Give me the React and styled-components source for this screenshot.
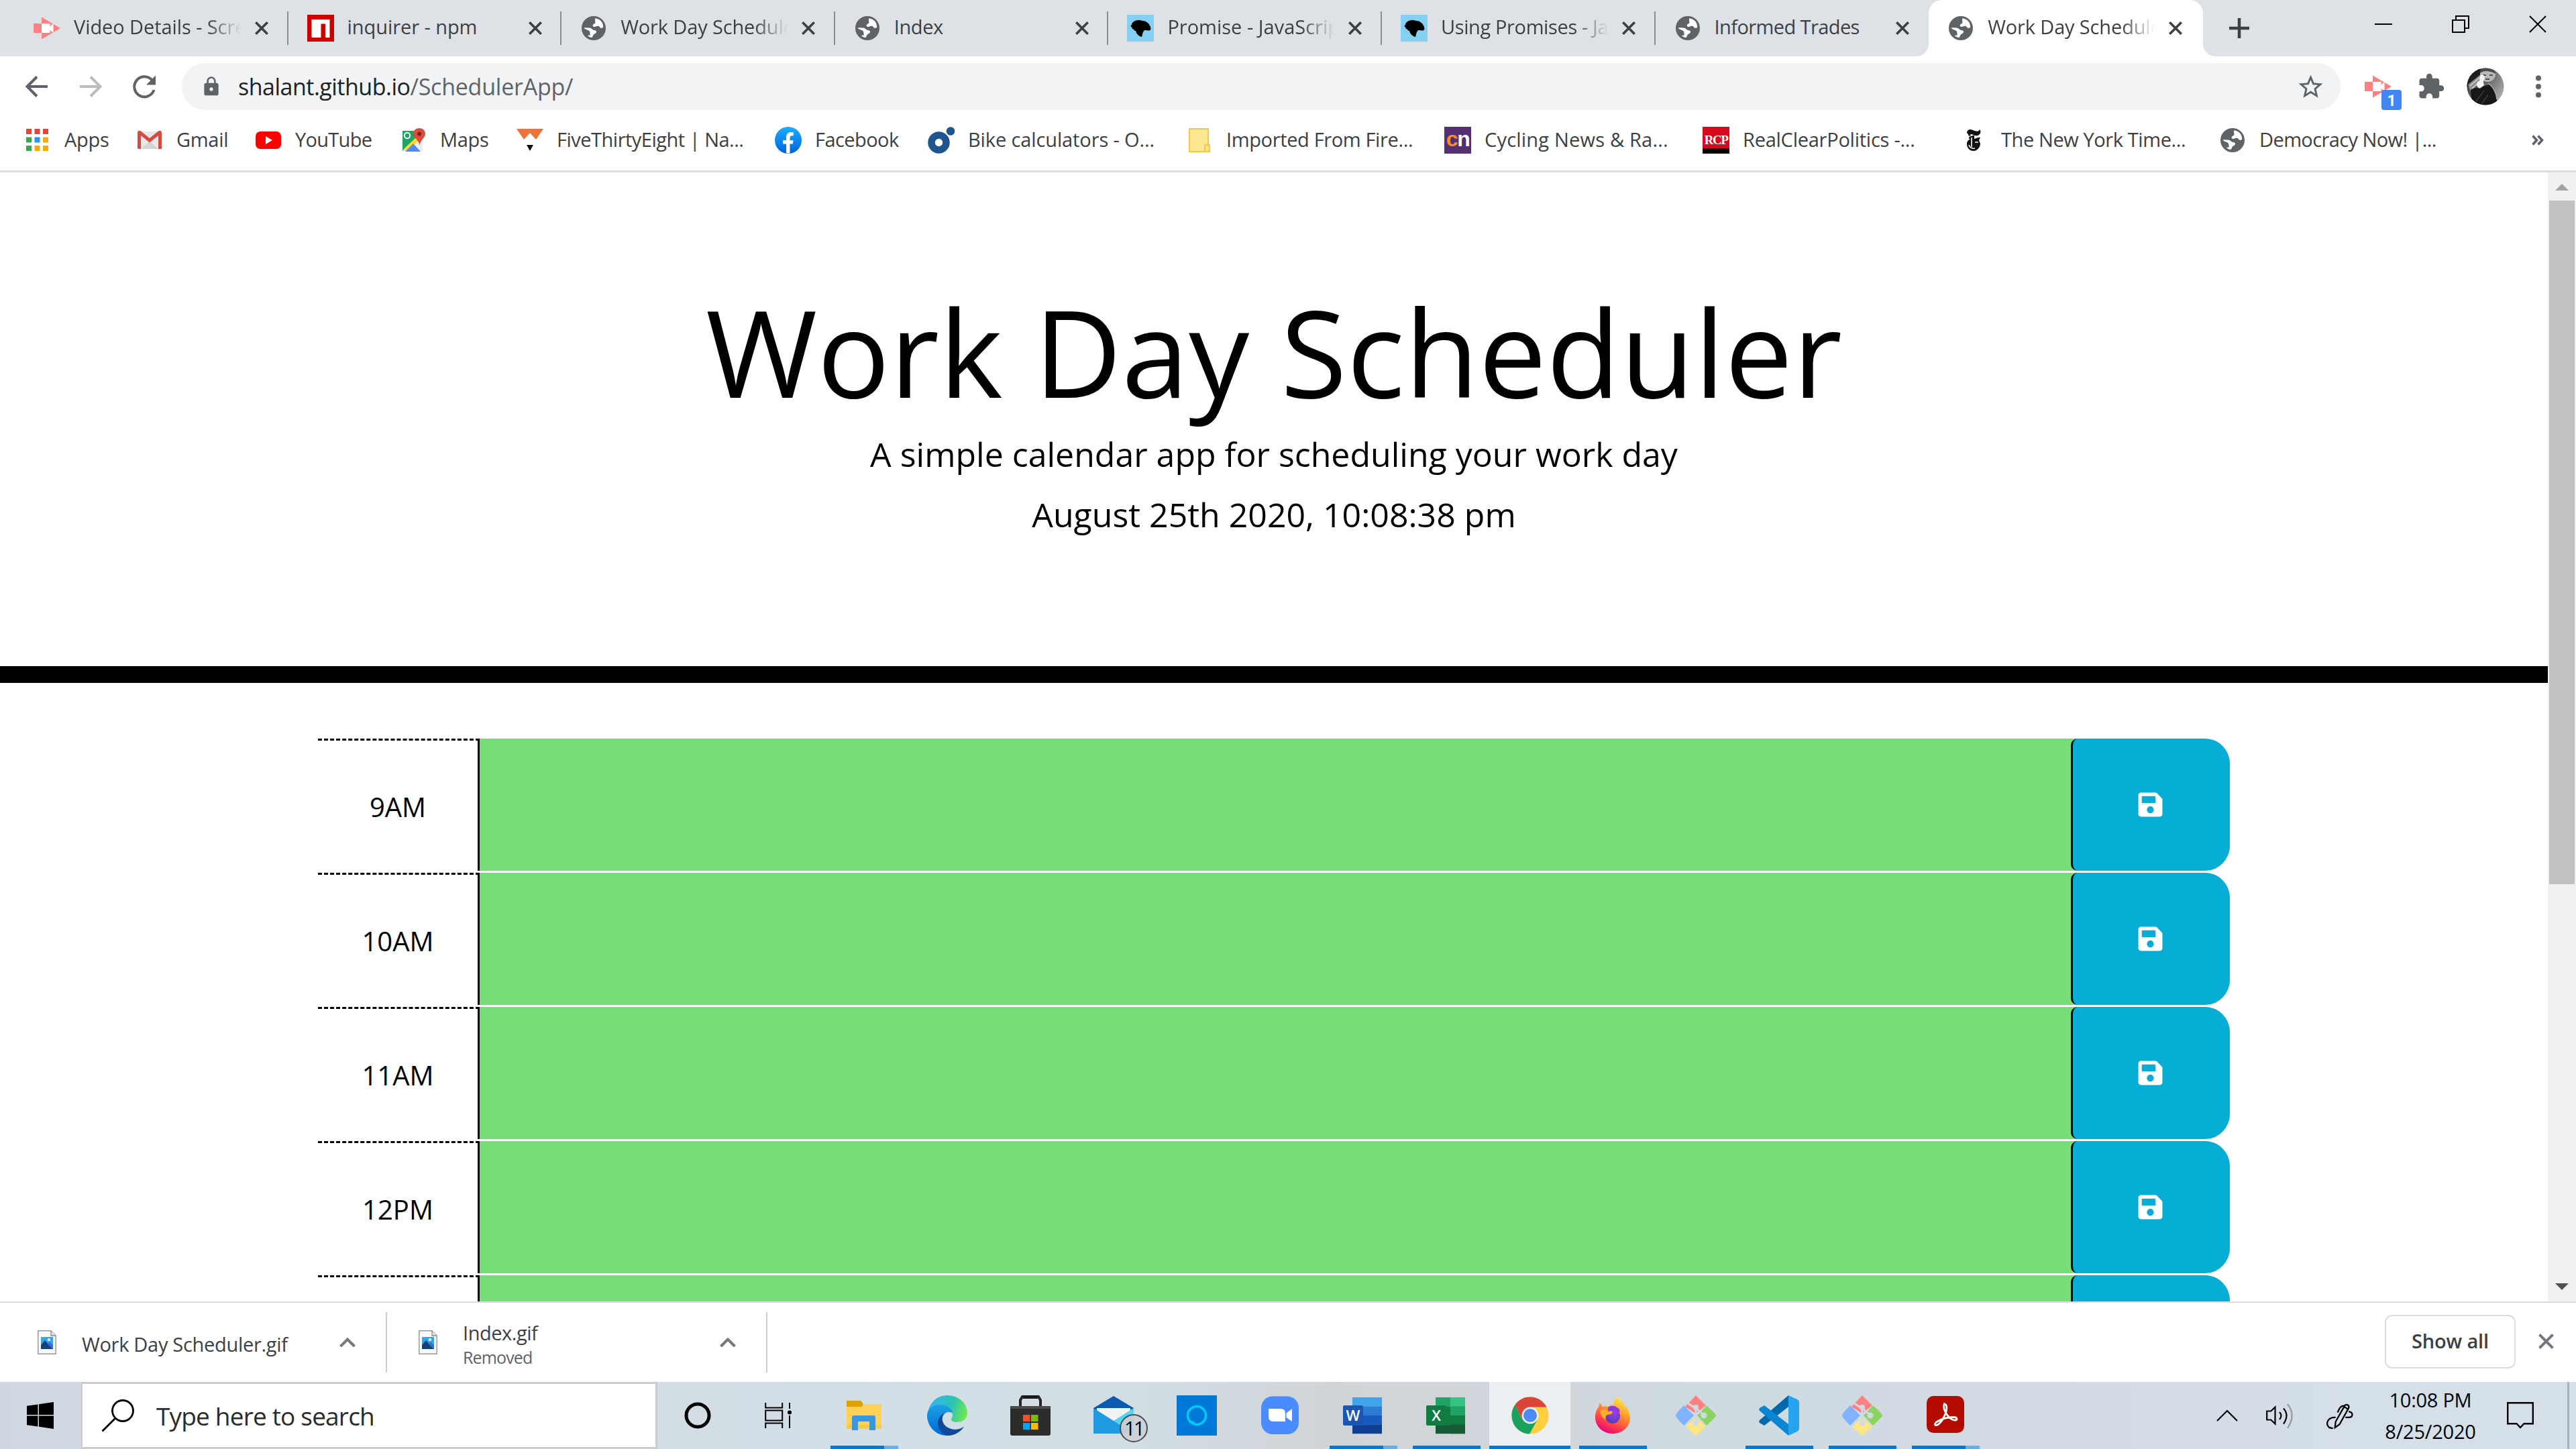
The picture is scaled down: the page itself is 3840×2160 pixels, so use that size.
import React from "react";
import styled, { createGlobalStyle } from "styled-components";
import { FaSave } from "react-icons/fa";
import { MdLock, MdExtension, MdStarBorder } from "react-icons/md";

const GlobalStyle = createGlobalStyle`
  *, *::before, *::after { box-sizing: border-box; }
  html, body { margin: 0; padding: 0; background: #fff; }
  body {
    font-family: "Open Sans", "Noto Sans", sans-serif;
    color: #3c4043;
    overflow: hidden;
  }
  svg { display: block; flex: none; }
`;

const Screen = styled.div`
  width: 3840px;
  height: 2160px;
  display: flex;
  flex-direction: column;
  background: #fff;
  overflow: hidden;
`;

const Label = styled.span`
  font-size: ${(p) => p.$size || 29}px;
  font-weight: ${(p) => p.$weight || 400};
  letter-spacing: ${(p) => p.$track || 0}px;
  color: ${(p) => p.$color || "#3c4043"};
  line-height: 40px;
  white-space: nowrap;
`;

/* ---------- tab strip ---------- */

const TabStrip = styled.div`
  height: 84px;
  flex: none;
  display: flex;
  padding-left: 22px;
  background: #dee1e6;
`;

const Tab = styled.div`
  position: relative;
  width: ${(p) => (p.$active ? 409 : 407.6)}px;
  height: 84px;
  flex: none;
  display: flex;
  align-items: center;
  padding-left: 28px;
  background: ${(p) => (p.$active ? "#fff" : "transparent")};
  border-radius: 20px 20px 0 0;

  &::before,
  &::after {
    content: "";
    display: ${(p) => (p.$active ? "block" : "none")};
    position: absolute;
    bottom: 0;
    width: 18px;
    height: 18px;
  }
  &::before {
    left: -18px;
    background: radial-gradient(circle at 0 0, transparent 17.5px, #fff 18px);
  }
  &::after {
    right: -18px;
    background: radial-gradient(circle at 100% 0, transparent 17.5px, #fff 18px);
  }
`;

const TabTitle = styled.div`
  width: 249px;
  height: 44px;
  margin: 0 21px 0 20px;
  padding-bottom: 4px;
  overflow: hidden;
  mask-image: ${(p) => (p.$fade ? "linear-gradient(90deg, #000 80%, transparent 100%)" : "none")};
`;

const TabDivider = styled.div`
  width: 2px;
  height: 50px;
  margin-left: auto;
  background: #8a8d91;
`;

const NewTab = styled.div`
  display: flex;
  align-items: center;
  margin-left: 38px;
`;

const WindowControls = styled.div`
  display: flex;
  margin-left: auto;
`;

const WindowButton = styled.div`
  width: 115px;
  height: 71px;
  display: flex;
  align-items: center;
  justify-content: center;
`;

/* ---------- toolbar ---------- */

const Toolbar = styled.div`
  height: 90px;
  flex: none;
  display: flex;
  align-items: center;
  padding: 0 38px 0 35px;
  color: #5f6368;
`;

const NavButtons = styled.div`
  display: flex;
  gap: 40px;
  width: 236px;
`;

const Omnibox = styled.div`
  width: 3218px;
  height: 70px;
  flex: none;
  display: flex;
  align-items: center;
  padding: 0 23px 0 28px;
  border-radius: 35px;
  background: #f1f3f4;
`;

const Url = styled.div`
  flex: 1;
  margin-left: 24px;
`;

const Extensions = styled.div`
  flex: 1;
  display: flex;
  align-items: center;
  padding-left: 36px;
`;

const ExtensionIcon = styled.div`
  position: relative;
  width: 78px;
  height: 40px;
`;

const Badge = styled.div`
  position: absolute;
  left: 25px;
  top: 25px;
  width: 30px;
  height: 30px;
  border-radius: 4px;
  background: #4285f4;
  color: #fff;
  font-family: Roboto, sans-serif;
  font-size: 23px;
  font-weight: 700;
  line-height: 33px;
  text-align: center;
`;

const PuzzleSlot = styled.div`
  width: 74px;
`;

const MenuSlot = styled.div`
  margin-left: auto;
  margin-right: 13px;
`;

/* ---------- bookmarks ---------- */

const BookmarkBar = styled.div`
  height: 83px;
  flex: none;
  display: flex;
  align-items: flex-start;
  padding: 13px 0 0 36px;
  border-bottom: 3px solid #dadce0;
`;

const Bookmark = styled.div`
  width: ${(p) => p.$width}px;
  height: 44px;
  flex: none;
  display: flex;
  align-items: center;
  gap: 20px;
`;

const BookmarkText = styled.div`
  padding-bottom: 2px;
`;

const Overflow = styled.div`
  height: 44px;
  display: flex;
  align-items: center;
  margin-left: 81px;
`;

/* ---------- page ---------- */

const Viewport = styled.div`
  height: 1683px;
  flex: none;
  display: flex;
  overflow: hidden;
`;

const Page = styled.main`
  width: 3798px;
  height: 1683px;
  overflow: hidden;
  color: #000;
`;

const Jumbotron = styled.header`
  height: 761px;
  padding-top: 159px;
  border-bottom: 25px solid #000;
  text-align: center;
`;

const Title = styled.h1`
  margin: 0 0 8px;
  font-size: 180px;
  font-weight: 400;
  line-height: 216px;
`;

const Lead = styled.p`
  margin: 0 0 15px;
  font-size: 50px;
  line-height: 75px;
`;

const Container = styled.section`
  width: 2850px;
  margin: 83px auto 0;
  display: flex;
  flex-direction: column;
  gap: 3px;
`;

const TimeRow = styled.div`
  height: 197px;
  flex: none;
  display: grid;
  grid-template-columns: 241px 1fr;
`;

const Hour = styled.div`
  display: flex;
  align-items: center;
  justify-content: center;
  padding-top: 3px;
  border-top: 3px dashed #000;
  border-right: 3px solid #000;
  font-size: 40px;
`;

const Slot = styled.div`
  display: flex;
  justify-content: flex-end;
  background: #77dd77;
  border-radius: 0 37.5px 37.5px 0;
`;

const SaveButton = styled.button`
  width: 237px;
  height: 197px;
  display: flex;
  align-items: center;
  justify-content: center;
  margin: 0;
  padding: 0 3px 0 0;
  border: 0 solid #000;
  border-left-width: 3px;
  border-radius: 10px 37.5px 37.5px 10px;
  background: #06aed5;
  color: #fff;
`;

const Scrollbar = styled.div`
  width: 42px;
  display: flex;
  flex-direction: column;
  align-items: center;
  padding-top: 17px;
  background: #f1f1f1;
`;

const Thumb = styled.div`
  width: 38px;
  height: 1019px;
  margin-top: 15px;
  background: #c1c1c1;
`;

const ScrollDown = styled.div`
  margin-top: auto;
  margin-bottom: 17px;
`;

/* ---------- download shelf ---------- */

const Shelf = styled.div`
  height: 120px;
  flex: none;
  display: flex;
  align-items: center;
  border-top: 2px solid #dadce0;
`;

const Download = styled.div`
  width: ${(p) => p.$width}px;
  height: 90px;
  display: flex;
  align-items: center;
  padding: 0 45px 0 ${(p) => p.$inset}px;
  border-right: 2px solid #cccdcf;
`;

const DownloadText = styled.div`
  display: flex;
  flex-direction: column;
  margin-left: 38px;
  margin-right: auto;
  padding-top: 5px;
`;

const SubLabel = styled(Label)`
  line-height: 33px;
`;

const ShowAll = styled.div`
  width: 195px;
  height: 80px;
  display: flex;
  align-items: center;
  justify-content: center;
  margin: 0 34px 2px auto;
  padding-bottom: 3px;
  border: 2px solid #dadce0;
  border-radius: 11px;
`;

const ShelfClose = styled.div`
  margin: 0 33px 3px 0;
`;

/* ---------- taskbar ---------- */

const Taskbar = styled.div`
  height: 100px;
  flex: none;
  display: flex;
  align-items: stretch;
  background: linear-gradient(
    90deg,
    #cfd7e0 0,
    #d3dfe6 1350px,
    #d2dce3 1750px,
    #d1d4d7 1980px,
    #d1d5da 2150px,
    #cfdae1 2530px,
    #d3dae4 3060px,
    #d5dfe8 3500px
  );
`;

const Start = styled.div`
  width: 121px;
  display: flex;
  align-items: center;
  padding-left: 40px;
`;

const Search = styled.div`
  width: 859px;
  display: flex;
  align-items: center;
  gap: 33px;
  padding-left: 28px;
  background: #fff;
  border: solid #cccccc;
  border-width: 3px 3px 3px 2px;
`;

const SearchText = styled.div`
  padding-top: 2px;
`;

const SystemButton = styled.div`
  width: 120px;
  display: flex;
  align-items: center;
  justify-content: center;
`;

const Apps = styled.div`
  display: flex;
  padding-left: 6px;
`;

const AppButton = styled.div`
  width: ${(p) => (p.$active ? 121 : 101)}px;
  margin: 0 ${(p) => (p.$active ? "1px 0 2px" : "11.5px")};
  display: flex;
  flex-direction: column;
  align-items: center;
  justify-content: space-between;
  background: ${(p) => (p.$active ? "#eceff2" : "transparent")};
`;

const AppIcon = styled.div`
  position: relative;
  margin-top: 20px;
  width: 60px;
  height: 60px;
  svg { width: 60px; height: 60px; }
`;

const RunMark = styled.div`
  width: 100%;
  height: 5px;
  background: ${(p) =>
    p.$state === "many"
      ? "linear-gradient(90deg, #0078d7 80px, #66afe7 80px)"
      : p.$state
      ? "#0078d7"
      : "transparent"};
`;

const MailCount = styled.div`
  position: absolute;
  left: 39px;
  top: 28px;
  width: 42px;
  height: 42px;
  border: 2px solid #4b4f52;
  border-radius: 50%;
  background: rgba(205, 208, 212, 0.93);
  color: #000;
  font-size: 29px;
  line-height: 38px;
  letter-spacing: -2.5px;
  text-align: center;
`;

const Tray = styled.div`
  display: flex;
  align-items: center;
  margin-left: auto;
`;

const TrayIcon = styled.div`
  width: ${(p) => p.$width}px;
`;

const Clock = styled.div`
  width: 140px;
  display: flex;
  flex-direction: column;
  align-items: center;
  gap: 7px;
  margin: 0 44px 0 44px;
`;

const DesktopEdge = styled.div`
  width: 13px;
  height: 100px;
  margin-left: 50px;
  border-left: 3px solid #a8b2bb;
`;

/* ---------- glyphs ---------- */

const CloseGlyph = ({ size = 20, color = "#3c4043", width = 3.6 }) => (
  <svg width={size} height={size} viewBox="0 0 20 20">
    <path d="M1.3 1.3 18.7 18.7M18.7 1.3 1.3 18.7" stroke={color} strokeWidth={width} fill="none" />
  </svg>
);

const ChevronUp = () => (
  <svg width="24" height="16" viewBox="0 0 24 16">
    <path d="M1.500 14 12 3.500 22.500 14" stroke="#75787c" strokeWidth="4" fill="none" />
  </svg>
);

const Globe = () => (
  <svg width="40" height="40" viewBox="0 0 40 40">
    <circle cx="20" cy="20" r="18" fill="#5f6368" />
    <path
      d="M22 5.500c4.500 0 8.500 2.600 10.600 6.300 1 2.200 1.600 4.700 1.600 7-1.200 1.200-3 1.400-4.200.6-1.500-1-1.700-2.400-3.400-2.600-2.400-.2-3.600 1.200-5.600 1.200-1.800 0-2.600-1.300-2.200-2.700.5-1.800 3-1.700 3.600-3.300.5-1.400-.8-2.500-.3-4 .2-1 .2-1.700-.1-2.500z"
      fill="#fff"
    />
    <path
      d="M5.800 19.500c2.500-.5 6.500-.4 9.200.2 2.300.6 2.800 2.600 4.800 3.100 2 .5 4.200.4 4.200 2.600 0 2.600-3.400 2.700-4.500 4.500-.8 1.400-.6 3.200-2.500 4.200C10.500 32.800 5.700 27 5.800 19.500z"
      fill="#fff"
    />
    <path d="M6 20c2 2.500 5 2 7.500 4.200 1.500 1.600.4 3.800 1.500 6l-5 1-5-7z" fill="#5f6368" />
  </svg>
);

const Screencastify = () => (
  <svg width="40" height="40" viewBox="0 0 40 40">
    <path d="M12 3.500 40 20 12 36.500z" fill="#ff8080" />
    <path d="M0 13h12v14H0z" fill="#ff8080" />
    <path d="M12 13h12.500v4.500l5-4.500v14l-5-4v4H12z" fill="#fff" />
  </svg>
);

const Npm = () => (
  <svg width="40" height="40" viewBox="0 0 40 40">
    <path d="M0 0h40v40H0z" fill="#cb0000" />
    <path d="M6.500 7h27v27h-6.500V13.500h-6.500V34h-14z" fill="#fff" />
  </svg>
);

const Mdn = () => (
  <svg width="40" height="40" viewBox="0 0 40 40">
    <path d="M0 0h40v40H0z" fill="#83d0f2" />
    <path
      d="M9 11c3-3 9-4 14-2 5 0 9 3 11 7 2 4 2 7-1 7.500-3 .5-6-1.500-8 .5-2 3-2 6-3 9-4-1-8-4-9-9-2 0-3-1-3-2.500-2 0-3-1-2.500-3C5 18 5 16 7 15c0-2 1-3 2-4z"
      fill="#000"
    />
  </svg>
);

const AppsGrid = () => {
  const c = ["#ea4335", "#ea4335", "#ea4335", "#34a853", "#2196f3", "#fbab00", "#34a853", "#fbab00", "#fbab00"];
  return (
    <svg width="40" height="40" viewBox="0 0 40 40">
      {c.map((f, i) => (
        <rect key={i} x={3 + (i % 3) * 12.5} y={3 + Math.floor(i / 3) * 12.5} width="8" height="8" fill={f} />
      ))}
    </svg>
  );
};

const Gmail = () => (
  <svg width="40" height="40" viewBox="0 0 40 40">
    <path d="M3 7h34v26H3z" fill="#e8e8e8" />
    <path d="M8 33 20 21l12 12z" fill="#d4d4d4" />
    <path d="M2 9c0-3 3-4 5-2.500L20 17 33 6.500C35 5 38 6 38 9v24h-5V13L20 23.500 7 13v20H4c-1.500 0-2-.5-2-2z" fill="#d84a3f" />
  </svg>
);

const YouTube = () => (
  <svg width="40" height="40" viewBox="0 0 40 40">
    <rect x="1" y="7" width="38" height="26" rx="7" fill="#f00" />
    <path d="m16 14 10 6-10 6z" fill="#fff" />
  </svg>
);

const Maps = () => (
  <svg width="40" height="40" viewBox="0 0 40 40">
    <path d="M4 6h30v30H4z" fill="#eceff1" />
    <path d="M4 6h20v14L4 36z" fill="#1fa463" />
    <path d="M5 34 24 16l4 4-16 17z" fill="#fdd835" />
    <path d="M8 37 20 25l11 12z" fill="#4f8cf3" />
    <circle cx="11" cy="13" r="4.200" fill="none" stroke="#fff" strokeWidth="2" />
    <path d="M29 2c5 0 9 3.500 9 8.500 0 6-7 8-8.500 17C28 18.500 20 16.500 20 10.500 20 5.500 24 2 29 2z" fill="#dd4b3e" />
    <circle cx="29" cy="10.500" r="3" fill="#7b231b" />
  </svg>
);

const Fox538 = () => (
  <svg width="40" height="40" viewBox="0 0 40 40">
    <path d="M0 3h40l-11 16-9-10-9 10z" fill="#ef7239" />
    <path d="M15 27h10l-5 9z" fill="#111" />
  </svg>
);

const Facebook = () => (
  <svg width="40" height="40" viewBox="0 0 40 40">
    <defs>
      <linearGradient id="fb" x1="0" y1="0" x2="0" y2="1">
        <stop offset="0" stopColor="#19afff" />
        <stop offset="1" stopColor="#0062e0" />
      </linearGradient>
    </defs>
    <circle cx="20" cy="20" r="20" fill="url(#fb)" />
    <path d="M17 39.500V25.500h-5V20h5v-4.500C17 10.500 20 8 24.200 8c2 0 3.600.3 3.600.3v4.900h-2.300c-2.300 0-3 1.400-3 2.900V20h5.200l-.9 5.500h-4.300v14z" fill="#fff" />
  </svg>
);

const BikeCalc = () => (
  <svg width="40" height="40" viewBox="0 0 40 40">
    <circle cx="16.500" cy="23.500" r="11" fill="none" stroke="#1e5590" strokeWidth="10.500" />
    <circle cx="34" cy="6.500" r="6.300" fill="#1e5590" />
  </svg>
);

const Folder = () => (
  <svg width="40" height="40" viewBox="0 0 40 40">
    <path d="M5 3h28v24h2v10H5z" fill="#ffe791" stroke="#f5c842" strokeWidth="2" />
    <path d="M28 37v-8c0-3 5-3 5 0" fill="none" stroke="#f5c842" strokeWidth="2" />
  </svg>
);

const Letters = styled.div`
  width: 40px;
  height: 40px;
  flex: none;
  background: ${(p) => p.$bg};
  color: #fff;
  font-family: ${(p) => p.$font};
  font-size: ${(p) => p.$size}px;
  font-weight: 700;
  line-height: ${(p) => p.$line}px;
  letter-spacing: -1.5px;
  text-align: center;
`;

const Orange = styled.span`
  color: #ff8a1e;
`;

const Cycling = () => (
  <Letters $bg="#543073" $font='"Liberation Sans", sans-serif' $size={32} $line={36}>
    <Orange>c</Orange>n
  </Letters>
);

const Rcp = () => (
  <Letters $bg="linear-gradient(#d60a1c 32px, #000 32px)" $font='"Liberation Serif", serif' $size={19} $line={39}>
    RCP
  </Letters>
);

const Nyt = () => (
  <svg width="40" height="40" viewBox="0 0 40 40">
    <path
      d="M9 8c1-4 5-5 9-3 5 2 8 3 10-1 3 3 1 8-3 9-3 1-6-1-9-2-3 0-3 3 0 3-3 1-5-1-5-3-1-1-2-1-2-3z"
      fill="#111"
    />
    <path
      d="M20 12v6c4-1 7-3 9-2l-2 4 2 5c0 6-5 11-10 11-6 0-10-5-10-10 0-4 2-7 5-7-2-1-3-3-1-4 3-2 5-1 7-3z"
      fill="#111"
    />
    <path d="M16 16v14M12 27c1 4 5 6 9 5M21 23h5" stroke="#fff" strokeWidth="1.600" fill="none" />
  </svg>
);

const Avatar = () => (
  <svg width="56" height="56" viewBox="0 0 56 56">
    <defs>
      <clipPath id="face"><circle cx="28" cy="28" r="27.500" /></clipPath>
      <linearGradient id="wall" x1="0" y1="0" x2="1" y2=".6">
        <stop offset="0" stopColor="#2a2a2a" />
        <stop offset=".6" stopColor="#6a6a6a" />
        <stop offset="1" stopColor="#a8a8a8" />
      </linearGradient>
    </defs>
    <g clipPath="url(#face)">
      <path d="M0 0h56v56H0z" fill="url(#wall)" />
      <path d="M0 14 20 0l4 12L8 26 0 28z" fill="#1c1c1c" />
      <path d="M2 25 22 9l4 5L6 36z" fill="#8f8f8f" />
      <path d="M5 27 20 14M8 31 23 17" stroke="#d8d8d8" strokeWidth="1.200" />
      <path d="M20 8c0-7 8-9 14-8 7 1 10 5 9 11-1 6-6 10-12 10-7 0-11-5-11-13z" fill="#b9b9b9" />
      <path d="M20 8C20 0 28-1 34 0c7 1 9 4 9 9-5-3-10-4-14-4-4 0-6 1-9 3z" fill="#4a4a4a" />
      <path d="M24 11h5M34 11h5M28 17h6" stroke="#2b2b2b" strokeWidth="1.600" />
      <path d="M20 12c2-3 5-2 7 1l-2 8-6-2zM16 21l8-3 2 8-7 5-4-4z" fill="#f4f4f4" />
      <path d="M6 33c5-3 9-4 14-2 4-3 8-5 14-6 8 5 11 14 12 31H8z" fill="#171717" />
      <path d="M32 23c7 5 12 13 13 24" stroke="#bdbdbd" strokeWidth="1.300" fill="none" />
      <path d="M14 50 26 34M22 54l10-14" stroke="#3a3a3a" strokeWidth="1.500" />
    </g>
  </svg>
);

const FileIcon = () => (
  <svg width="28" height="36" viewBox="0 0 28 36">
    <path d="M.8.8H20l7.200 7.200v27.200H.8z" fill="#f8f9fa" stroke="#9a9a9a" strokeWidth="1.500" />
    <path d="M20 .8V8h7.200" fill="#e6e6e6" stroke="#8a8a8a" strokeWidth="1.300" />
    <path d="M5 10h18v18H5z" fill="#2fa8ec" />
    <path d="M5 22 11 15l12 13H5z" fill="#15407f" />
    <path d="m14 20 4-3 5 5v6z" fill="#3c6fd8" />
    <circle cx="17" cy="14" r="2" fill="#fff" />
  </svg>
);

/* ---------- taskbar icons ---------- */

const Explorer = () => (
  <svg viewBox="0 0 60 60">
    <path d="M4 8h21l4 5-4 9H4z" fill="#e0a000" />
    <path d="M4 17h24l3-4h25v37H4z" fill="#ffd257" />
    <path d="M4 44h52v6H4z" fill="#fbc02d" opacity=".5" />
    <path d="M12 52V33q0-3 3-3h29q3 0 3 3v19h-9V39H21v13z" fill="#3a96dd" />
  </svg>
);

const Edge = () => (
  <svg viewBox="0 0 60 60">
    <defs>
      <linearGradient id="e1" x1="0" y1=".3" x2="1" y2=".5">
        <stop offset="0" stopColor="#35b5f1" />
        <stop offset=".6" stopColor="#2bc3b5" />
        <stop offset="1" stopColor="#6fe84c" />
      </linearGradient>
      <linearGradient id="e2" x1="0" y1="0" x2="0" y2="1">
        <stop offset="0" stopColor="#1da0e4" />
        <stop offset="1" stopColor="#0068d6" />
      </linearGradient>
    </defs>
    <path d="M1 27C3 11 15 0 30 0c17 0 30 12 30 26 0 9-7 14-15 14-6 0-9-2-9-4 0-1.500 2-3 2-7 0-6-6-13-18-13C10 16 3 21 1 27z" fill="url(#e1)" />
    <path d="M0 30c0-9 8-16 19-16 11 0 19 6 19 13-6-6-16 0-16 11 0 12 9 20 13 21.500C14 63 0 46 0 30z" fill="url(#e2)" />
    <path d="M28 25c-7 3-8 17 3 23 9 5 18 3 24-1.500C51 54 41 60 31 60c-9-1-15-11-15-19 0-7 5-13 12-16z" fill="#10489a" />
  </svg>
);

const Store = () => (
  <svg viewBox="0 0 60 60">
    <path d="M15 20V7l3-5h24l3 5v13" fill="none" stroke="#262626" strokeWidth="4" />
    <path d="M19 0h22v5H19z" fill="#1a1a1a" />
    <path d="M0 16h60v41q0 3-3 3H3q-3 0-3-3z" fill="#2c2c2c" />
    <path d="M0 16h60v4H0z" fill="#4a4a4a" />
    <path d="M19 29h10.500v10H19z" fill="#f25022" />
    <path d="M31 29h10.500v10H31z" fill="#7fba00" />
    <path d="M19 41h10.500v10H19z" fill="#00a4ef" />
    <path d="M31 41h10.500v10H31z" fill="#ffb900" />
  </svg>
);

const Mail = () => (
  <svg viewBox="0 0 60 60">
    <path d="M0 19 30 1l30 18v10H0z" fill="#0a5bb0" />
    <path d="M5 19h50v10L30 42 5 28z" fill="#f3f3f3" />
    <path d="M60 19v38L30 38z" fill="#50d5f5" />
    <path d="M0 19 60 57H0z" fill="#1e9be2" />
  </svg>
);

const Alexa = () => (
  <svg viewBox="0 0 60 60">
    <path d="M0 0h60v60H0z" fill="#0078d7" />
    <circle cx="30" cy="30" r="13.500" fill="none" stroke="#00caff" strokeWidth="3.500" />
    <path d="M28 44c1-3-1-4-5-6l-4 2z" fill="#00caff" />
  </svg>
);

const Zoom = () => (
  <svg viewBox="0 0 60 60">
    <rect x="2" y="1.500" width="56" height="56.500" rx="17" fill="#4a8cff" />
    <path d="M13 20h18q7 0 7 7v12H20q-7 0-7-7zM39.500 26.500 48 20v19l-8.500-6z" fill="#fff" />
  </svg>
);

const OfficeTile = styled.div`
  position: absolute;
  left: 0;
  top: 15px;
  width: 30px;
  height: 30px;
  border-radius: 2px;
  background: ${(p) => p.$bg};
  color: #fff;
  font-size: 22px;
  font-weight: 600;
  line-height: 29px;
  text-align: center;
`;

const Office = ({ colors, tile, letter, split }) => (
  <>
    <svg viewBox="0 0 60 60">
      {colors.map((c, i) => (
        <rect key={i} x="14" y={3 + i * 13.5} width="44" height="13.700" fill={c} />
      ))}
      {split && split.map((c, i) => <rect key={i} x="36" y={3 + i * 13.5} width="22" height="13.700" fill={c} />)}
    </svg>
    <OfficeTile $bg={tile}>{letter}</OfficeTile>
  </>
);

const Chrome = () => (
  <svg viewBox="0 0 60 60">
    <circle cx="30" cy="30" r="27.500" fill="#ffcd40" />
    <path d="M30 30V17.500H54.500A27.500 27.500 0 0 0 7.500 14L18 36z" fill="#db4437" />
    <path d="M7.500 14A27.500 27.500 0 0 0 29 57.500L41 36 30 30l-12 6z" fill="#1aa15f" />
    <circle cx="30" cy="30" r="12.500" fill="#f1f1f1" />
    <circle cx="30" cy="30" r="10" fill="#4c8bf5" />
  </svg>
);

const Firefox = () => (
  <svg viewBox="0 0 60 60">
    <defs>
      <linearGradient id="f1" x1=".8" y1="0" x2=".3" y2="1">
        <stop offset="0" stopColor="#fff44f" />
        <stop offset=".4" stopColor="#ff9a2a" />
        <stop offset=".75" stopColor="#ff3b4e" />
        <stop offset="1" stopColor="#e4007c" />
      </linearGradient>
      <radialGradient id="f2" cx=".6" cy=".2" r=".9">
        <stop offset="0" stopColor="#a43df0" />
        <stop offset="1" stopColor="#4a3fa5" />
      </radialGradient>
    </defs>
    <path d="M37 2c7 5 8 9 13 15 4 5 6 10 6 16 0 14-11 24-26 24S4 46 4 33c0-7 2-12 5-16l2-6 4 6c3-1 6-1 8 0 4-3 7-4 9-3-1-5 1-9 5-12z" fill="url(#f1)" />
    <circle cx="30" cy="31" r="11" fill="url(#f2)" />
    <path d="M23 18c4-3 10-3 13 0 3 1 5 4 5 7l-4-1-6-2-8 2z" fill="#8a3ce0" />
    <path d="M12 22c5-2 9 0 12 2 3-1 5 0 6 1-1 3-5 4-8 4-3 2-3 5-2 8-6-4-9-9-8-15z" fill="#ffae2c" />
  </svg>
);

const Git = () => (
  <svg viewBox="0 0 60 60">
    <path d="M30 0 45 15 30 27 14 17z" fill="#ff8080" />
    <path d="M12 15 27 30 12 45Q0 33 0 30T12 15z" fill="#80b3ff" />
    <path d="M46 15Q60 28 60 30T46 45L32 30z" fill="#8dd35f" />
    <path d="M30 33 45 47 30 60 15 47z" fill="#ffe680" />
    <path d="M17 11 30 20v20M31 20l11 10" stroke="#d0dae2" strokeWidth="3" fill="none" />
    <circle cx="30" cy="18" r="4" fill="#d0dae2" />
    <circle cx="42" cy="30" r="4.500" fill="#d0dae2" />
    <circle cx="30" cy="41" r="4.500" fill="#d0dae2" />
  </svg>
);

const VsCode = () => (
  <svg viewBox="0 0 60 60">
    <path d="M44 0v17L8 45 1 41q-1.500-2 0-4z" fill="#0069ac" />
    <path d="M44 60V43L8 15l-7 4q-1.500 2 0 4z" fill="#0a86d3" />
    <path d="M44 0 57 6q3 1.500 3 4v40q0 2.500-3 4L44 60z" fill="#26a4f0" />
  </svg>
);

const Acrobat = () => (
  <svg viewBox="0 0 60 60">
    <rect x="2" y="1" width="56" height="55" rx="10" fill="#b30b00" />
    <path
      d="M28.500 12.500c-2 4-.5 10 4 16.500 4 5.500 9 8.500 12.500 8 3.500-.5 2.500-4.500-3-4.500-8 0-17 2.500-24 6.500-5 3-4 6.500-1 5.500 6-2 13-14 14.500-22 .8-4.500.2-9-3-10z"
      fill="none"
      stroke="#fff"
      strokeWidth="2.800"
    />
  </svg>
);

const WORD = ["#41a5ee", "#2b7cd3", "#185abd", "#103f91"];
const EXCEL = ["#21a366", "#107c41", "#107c41", "#185c37"];
const EXCEL_RIGHT = ["#33c481", "#21a366", "#107c41", "#185c37"];

/* ---------- data ---------- */

const TABS = [
  { icon: <Screencastify />, title: "Video Details - Screencastify", fade: true, track: -0.09 },
  { icon: <Npm />, title: "inquirer - npm", track: -0.07 },
  { icon: <Globe />, title: "Work Day Scheduler", fade: true, track: -0.15 },
  { icon: <Globe />, title: "Index", track: -0.4 },
  { icon: <Mdn />, title: "Promise - JavaScript | MDN", fade: true, track: 0 },
  { icon: <Mdn />, title: "Using Promises - JavaScript", fade: true, track: -0.38 },
  { icon: <Globe />, title: "Informed Trades", track: -0.59 },
  { icon: <Globe />, title: "Work Day Scheduler", fade: true, track: -0.15, active: true },
];

const BOOKMARKS = [
  { icon: <AppsGrid />, text: "Apps", width: 167, track: -0.27 },
  { icon: <Gmail />, text: "Gmail", width: 177, track: -0.3 },
  { icon: <YouTube />, text: "YouTube", width: 216, track: -0.7 },
  { icon: <Maps />, text: "Maps", width: 174, track: -0.31 },
  { icon: <Fox538 />, text: "FiveThirtyEight | Na...", width: 385, track: -0.5 },
  { icon: <Facebook />, text: "Facebook", width: 228, track: -0.56 },
  { icon: <BikeCalc />, text: "Bike calculators - O...", width: 385, track: -0.12 },
  { icon: <Folder />, text: "Imported From Fire...", width: 385, track: -0.36 },
  { icon: <Cycling />, text: "Cycling News & Ra...", width: 385, track: 0.2 },
  { icon: <Rcp />, text: "RealClearPolitics -...", width: 385, track: -0.25 },
  { icon: <Nyt />, text: "The New York Time...", width: 385, track: -0.4 },
  { icon: <Globe />, text: "Democracy Now! |...", width: 385, track: -0.6 },
];

const HOURS = ["9AM", "10AM", "11AM", "12PM", "1PM"];

const TASKS = [
  { id: "explorer", icon: <Explorer />, state: "many" },
  { id: "edge", icon: <Edge /> },
  { id: "store", icon: <Store /> },
  { id: "mail", icon: <><Mail /><MailCount>11</MailCount></> },
  { id: "alexa", icon: <Alexa /> },
  { id: "zoom", icon: <Zoom /> },
  { id: "word", icon: <Office colors={WORD} tile="#1b56b5" letter="W" />, state: "many" },
  { id: "excel", icon: <Office colors={EXCEL} split={EXCEL_RIGHT} tile="#107c41" letter="X" />, state: "one" },
  { id: "chrome", icon: <Chrome />, state: "one", active: true },
  { id: "firefox", icon: <Firefox />, state: "one" },
  { id: "git", icon: <Git /> },
  { id: "vscode", icon: <VsCode />, state: "one" },
  { id: "git2", icon: <Git />, state: "one" },
  { id: "acrobat", icon: <Acrobat />, state: "many" },
];

export default function App() {
  return (
    <>
      <GlobalStyle />
      <Screen>
        <TabStrip>
          {TABS.map((t, i) => (
            <Tab key={i} $active={t.active}>
              {t.icon}
              <TabTitle $fade={t.fade}>
                <Label $track={t.track}>{t.title}</Label>
              </TabTitle>
              <CloseGlyph />
              {i < 6 && <TabDivider />}
            </Tab>
          ))}
          <NewTab>
            <svg width="32" height="32" viewBox="0 0 32 32">
              <path d="M16 1v30M1 16h30" stroke="#3c4043" strokeWidth="4.500" />
            </svg>
          </NewTab>
          <WindowControls>
            <WindowButton>
              <svg width="26" height="26" viewBox="0 0 26 26">
                <path d="M0 13h26" stroke="#000" strokeWidth="2" />
              </svg>
            </WindowButton>
            <WindowButton>
              <svg width="26" height="26" viewBox="0 0 26 26">
                <path d="M1 7h18v18H1zM6 7V1h19v18h-6" fill="none" stroke="#000" strokeWidth="2" />
              </svg>
            </WindowButton>
            <WindowButton>
              <svg width="26" height="26" viewBox="0 0 26 26">
                <path d="m1 1 24 24M25 1 1 25" stroke="#000" strokeWidth="2" />
              </svg>
            </WindowButton>
          </WindowControls>
        </TabStrip>

        <Toolbar>
          <NavButtons>
            <svg width="40" height="40" viewBox="0 0 40 40">
              <path d="M36 20H7M20 5.500 5.500 20 20 34.500" fill="none" stroke="#5f6368" strokeWidth="4" />
            </svg>
            <svg width="40" height="40" viewBox="0 0 40 40">
              <path d="M4 20h29M20 5.500 34.500 20 20 34.500" fill="none" stroke="#babcbe" strokeWidth="4" />
            </svg>
            <svg width="40" height="40" viewBox="0 0 40 40">
              <path d="M32 11A15 15 0 1 0 34.500 25" fill="none" stroke="#5f6368" strokeWidth="4" />
              <path d="M37 3.500V17.500H23z" fill="#5f6368" />
            </svg>
          </NavButtons>
          <Omnibox>
            <MdLock size={32} />
            <Url>
              <Label $size={34} $track={-0.5} $color="#202124">shalant.github.io</Label>
              <Label $size={34} $track={-0.24} $color="#5f6368">/SchedulerApp/</Label>
            </Url>
            <MdStarBorder size={43} />
          </Omnibox>
          <Extensions>
            <ExtensionIcon>
              <Screencastify />
              <Badge>1</Badge>
            </ExtensionIcon>
            <PuzzleSlot>
              <MdExtension size={42} />
            </PuzzleSlot>
            <Avatar />
            <MenuSlot>
              <svg width="10" height="34" viewBox="0 0 10 34">
                <circle cx="5" cy="4.500" r="4" fill="#5f6368" />
                <circle cx="5" cy="17" r="4" fill="#5f6368" />
                <circle cx="5" cy="29.500" r="4" fill="#5f6368" />
              </svg>
            </MenuSlot>
          </Extensions>
        </Toolbar>

        <BookmarkBar>
          {BOOKMARKS.map((b) => (
            <Bookmark key={b.text} $width={b.width}>
              {b.icon}
              <BookmarkText>
                <Label $track={b.track}>{b.text}</Label>
              </BookmarkText>
            </Bookmark>
          ))}
          <Overflow>
            <svg width="18" height="16" viewBox="0 0 18 16">
              <path d="m1.500 1.500 6 6.500-6 6.500M9.500 1.500l6 6.500-6 6.500" fill="none" stroke="#5f6368" strokeWidth="3.500" />
            </svg>
          </Overflow>
        </BookmarkBar>

        <Viewport>
          <Page>
            <Jumbotron>
              <Title>Work Day Scheduler</Title>
              <Lead>A simple calendar app for scheduling your work day</Lead>
              <Lead>August 25th 2020, 10:08:38 pm</Lead>
            </Jumbotron>
            <Container>
              {HOURS.map((h) => (
                <TimeRow key={h}>
                  <Hour>{h}</Hour>
                  <Slot>
                    <SaveButton>
                      <FaSave size={41} />
                    </SaveButton>
                  </Slot>
                </TimeRow>
              ))}
            </Container>
          </Page>
          <Scrollbar>
            <svg width="20" height="10" viewBox="0 0 20 10">
              <path d="M10 0 20 10H0z" fill="#a3a3a3" />
            </svg>
            <Thumb />
            <ScrollDown>
              <svg width="20" height="10" viewBox="0 0 20 10">
                <path d="M0 0h20L10 10z" fill="#505050" />
              </svg>
            </ScrollDown>
          </Scrollbar>
        </Viewport>

        <Shelf>
          <Download $width={577} $inset={56}>
            <FileIcon />
            <DownloadText>
              <Label $track={-0.3}>Work Day Scheduler.gif</Label>
            </DownloadText>
            <ChevronUp />
          </Download>
          <Download $width={567} $inset={47}>
            <FileIcon />
            <DownloadText>
              <Label $track={-0.47}>Index.gif</Label>
              <SubLabel $size={25} $track={-0.86} $color="#5f6368">Removed</SubLabel>
            </DownloadText>
            <ChevronUp />
          </Download>
          <ShowAll>
            <Label $weight={600} $track={-0.17}>Show all</Label>
          </ShowAll>
          <ShelfClose>
            <CloseGlyph size={23} color="#75787c" width={3.4} />
          </ShelfClose>
        </Shelf>

        <Taskbar>
          <Start>
            <svg width="40" height="40" viewBox="0 0 40 40">
              <path d="M0 5.700 16.500 3.400V19H0zM18 3.200 40 0v19H18zM0 20.500h16.500v16L0 34.300zM18 20.500h22V40l-22-3.200z" fill="#000" />
            </svg>
          </Start>
          <Search>
            <svg width="49" height="49" viewBox="0 0 49 49">
              <circle cx="32" cy="17" r="15.500" fill="none" stroke="#000" strokeWidth="2.800" />
              <path d="M21 28 1.500 47.500" stroke="#000" strokeWidth="2.800" />
            </svg>
            <SearchText>
              <Label $size={37} $track={-0.82} $color="#2b2b2b">Type here to search</Label>
            </SearchText>
          </Search>
          <SystemButton>
            <svg width="40" height="40" viewBox="0 0 40 40">
              <circle cx="20" cy="20" r="17" fill="none" stroke="#000" strokeWidth="5" />
            </svg>
          </SystemButton>
          <SystemButton>
            <svg width="40" height="40" viewBox="0 0 40 40">
              <path d="M1.200 1v7.500h25V1M1.200 12.500h25v15h-25zM1.200 39v-7.500h25V39M37 1v9M37 20v19" fill="none" stroke="#000" strokeWidth="2" />
              <circle cx="37" cy="15.500" r="3" fill="#000" />
            </svg>
          </SystemButton>
          <Apps>
            {TASKS.map((t) => (
              <AppButton key={t.id} $active={t.active}>
                <AppIcon>{t.icon}</AppIcon>
                <RunMark $state={t.state} />
              </AppButton>
            ))}
          </Apps>
          <Tray>
            <TrayIcon $width={74}>
              <svg width="32" height="18" viewBox="0 0 32 18">
                <path d="M1 17 16 2l15 15" fill="none" stroke="#000" strokeWidth="2.200" />
              </svg>
            </TrayIcon>
            <TrayIcon $width={90}>
              <svg width="42" height="38" viewBox="0 0 42 38">
                <path d="M1.200 12.500h6L13.500 6.500v25L7.200 25.500h-6z" fill="none" stroke="#000" strokeWidth="2.200" />
                <path d="M20 14q5 5 0 11M26 8.500q9 10 0 23" fill="none" stroke="#000" strokeWidth="2.200" />
                <path d="M32 2q13 16 0 36" fill="none" stroke="#959da5" strokeWidth="2.400" />
              </svg>
            </TrayIcon>
            <TrayIcon $width={41}>
              <svg width="41" height="41" viewBox="0 0 42 42">
                <path
                  d="M27 7 14 30l-1 9 7-5L34 9q1-4-3-5-3 0-4 3zM27 7l6 4M28 6c-6-1-8 3-11 10M14 23.500C5 23 1 28 1 33q1 7 9 7M29 23.500h6c6-1 6-8-1-9"
                  fill="none"
                  stroke="#000"
                  strokeWidth="2.300"
                />
              </svg>
            </TrayIcon>
            <Clock>
              <Label $track={-0.27} $color="#000">10:08 PM</Label>
              <Label $track={-0.22} $color="#000">8/25/2020</Label>
            </Clock>
            <svg width="40" height="40" viewBox="0 0 40 40">
              <path d="M1.200 1.200h37.600v31H25.500L20 38l-5.500-5.800H1.200z" fill="none" stroke="#000" strokeWidth="2.400" />
            </svg>
            <DesktopEdge />
          </Tray>
        </Taskbar>
      </Screen>
    </>
  );
}
